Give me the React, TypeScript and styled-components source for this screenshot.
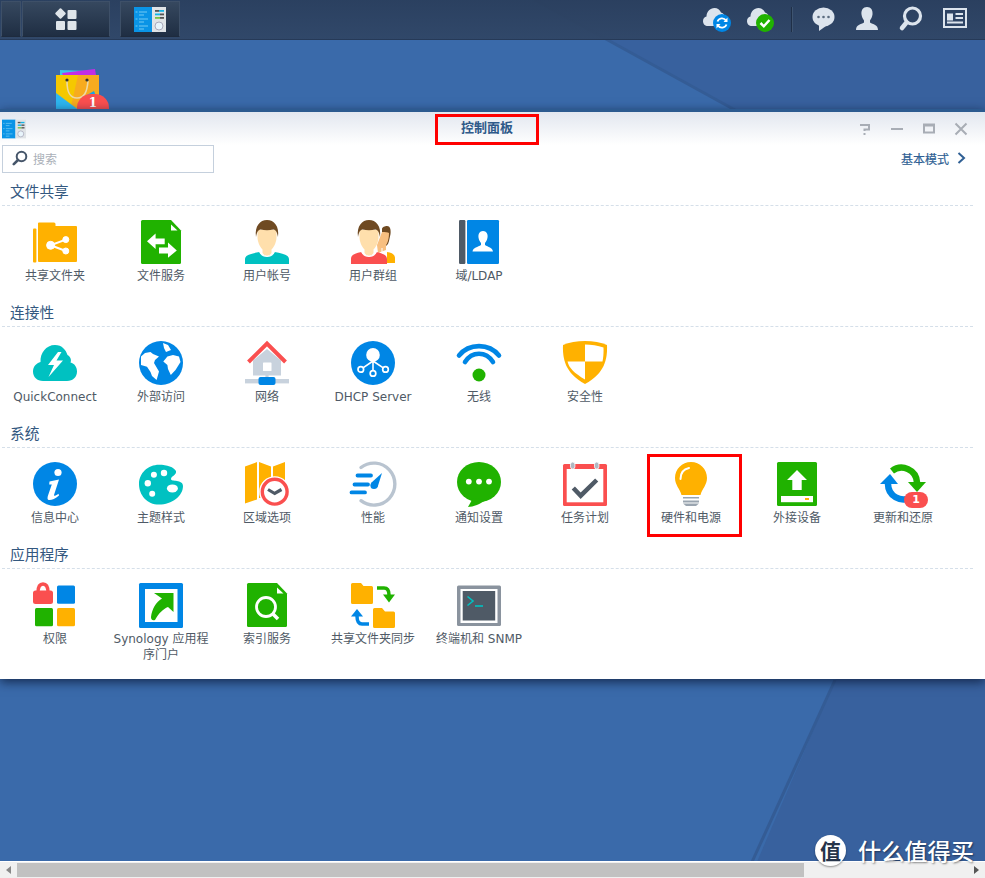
import React from "react";
import styled, { createGlobalStyle } from "styled-components";

const FONT = `"DejaVu Sans", "Noto Sans CJK SC", sans-serif`;
const BLUE = "#0086e5";
const GREEN = "#20b200";
const ORANGE = "#ffb100";
const TEAL = "#00c1c1";
const RED = "#fa4f4f";
const SLATE = "#4f5a66";
const TRAY = "#dce4ed";

const Global = createGlobalStyle`
  html, body { margin: 0; padding: 0; background: #3a66a4; }
  * { box-sizing: border-box; }
`;

const Root = styled.div`
  position: relative;
  width: 985px;
  height: 878px;
  overflow: hidden;
  display: flex;
  flex-direction: column;
  font-family: ${FONT};
`;
const Wallpaper = styled.svg`
  position: absolute;
  inset: 0;
  width: 985px;
  height: 878px;
`;
const TopBar = styled.header`
  position: relative;
  height: 40px;
  flex: none;
  display: flex;
  align-items: stretch;
  padding: 1px 0 2px 1px;
  background: linear-gradient(180deg, rgba(42, 62, 92, 0.95), rgba(48, 70, 102, 0.95));
  border-bottom: 1px solid #263a58;
`;
const Tab = styled.div<{ $w: number; $gap?: number }>`
  width: ${(p) => p.$w}px;
  margin-right: ${(p) => p.$gap ?? 0}px;
  display: flex;
  align-items: center;
  justify-content: center;
  border: 1px solid #3e5068;
  border-bottom-color: #1e2b3e;
  background: linear-gradient(180deg, #36485f, #1f2e43);
`;
const Tray = styled.div`
  margin-left: auto;
  display: flex;
  align-items: center;
  padding-right: 18px;
`;
const TrayIcon = styled.svg<{ $w: number; $gap: number }>`
  width: ${(p) => p.$w}px;
  height: 26px;
  margin-right: ${(p) => p.$gap}px;
  overflow: visible;
`;
const Separator = styled.div`
  width: 1px;
  height: 25px;
  margin-right: 20px;
  background: #1f2f47;
  box-shadow: 1px 0 0 #3e5470;
`;
const Shortcuts = styled.div`
  position: relative;
  height: 69px;
  flex: none;
  overflow: hidden;
  padding: 27px 0 0 56px;
`;
const ShopWrap = styled.div`
  position: relative;
  width: 44px;
  height: 42px;
`;
const ShopBadge = styled.span`
  position: absolute;
  left: 21px;
  top: 27px;
  width: 32px;
  height: 15px;
  padding-top: 3px;
  border-radius: 14px 14px 0 0;
  background: ${RED};
  color: #fff;
  font: bold 12px/12px "DejaVu Serif", serif;
  text-align: center;
`;
const Win = styled.section`
  position: relative;
  flex: none;
  background: #fff;
  border-top: 3px solid #2c5a8f;
  padding-bottom: 13px;
  box-shadow: 0 3px 10px rgba(8, 22, 50, 0.75);
`;
const TitleBar = styled.div`
  height: 33px;
  display: grid;
  grid-template-columns: 435px 104px 1fr;
  align-items: end;
  background: linear-gradient(180deg, #e2e7ef, #fff);
`;
const TitleLeft = styled.div`
  align-self: center;
  padding-left: 2px;
  display: flex;
`;
const Title = styled.h1`
  margin: 0;
  height: 31px;
  border: 3px solid #f00;
  text-align: center;
  font: bold 13px/22px ${FONT};
  color: #2f5a8a;
`;
const Controls = styled.div`
  align-self: center;
  justify-self: end;
  display: flex;
  gap: 16px;
  padding-right: 16px;
`;
const CtrlIcon = styled.svg`
  width: 16px;
  height: 16px;
  display: block;
`;
const Toolbar = styled.div`
  height: 28px;
  display: flex;
  align-items: center;
  justify-content: space-between;
  padding: 0 19px 0 2px;
`;
const Search = styled.div`
  width: 212px;
  height: 28px;
  display: flex;
  align-items: center;
  gap: 5px;
  padding: 0 0 2px 9px;
  border: 1px solid #c5d0dd;
  color: #aab0b8;
  font-size: 12px;
`;
const ModeLink = styled.a`
  display: flex;
  align-items: center;
  gap: 8px;
  padding-bottom: 2px;
  color: #2f5f94;
  font: 12px ${FONT};
  -webkit-text-stroke: 0.2px #2f5f94;
`;
const Sections = styled.div`
  padding-top: 9px;
`;
const Group = styled.div`
  min-height: 121px;
  margin: 0 12px 0 2px;
`;
const GroupTitle = styled.h2`
  margin: 0;
  height: 24px;
  padding-left: 8px;
  border-bottom: 1px dashed #d5dfe9;
  font: normal 14.7px/20px ${FONT};
  color: #33587f;
`;
const Grid = styled.div`
  display: flex;
  padding-top: 14px;
`;
const Item = styled.div<{ $marked?: boolean }>`
  position: relative;
  width: 106px;
  display: flex;
  flex-direction: column;
  align-items: center;
  ${(p) =>
    p.$marked
      ? `&::after { content: ""; position: absolute; left: 9px; right: 2px; top: -8px; bottom: -11px; border: 3px solid #f00; }`
      : ""}
`;
const IconBox = styled.div`
  position: relative;
  width: 44px;
  height: 44px;
`;
const Glyph = styled.svg`
  display: block;
  width: 44px;
  height: 44px;
  overflow: visible;
`;
const CountBadge = styled.span`
  position: absolute;
  left: 23px;
  top: 30px;
  width: 24px;
  height: 16px;
  border-radius: 8px;
  background: ${RED};
  color: #fff;
  font: bold 11px/16px ${FONT};
  text-align: center;
`;
const Label = styled.div`
  width: 102px;
  margin-top: 4px;
  text-align: center;
  font-size: 12px;
  line-height: 16px;
  color: ${SLATE};
`;
const Desktop = styled.div`
  flex: 1;
`;
const ScrollBar = styled.div`
  position: relative;
  height: 17px;
  flex: none;
  display: flex;
  align-items: center;
  border-top: 1px solid #fff;
  background: #f0f0f0;
`;
const Arrow = styled.i<{ $right?: boolean }>`
  display: block;
  flex: none;
  margin: ${(p) => (p.$right ? "0 6px 0 auto" : "0 6px 0 6px")};
  border-style: solid;
  border-width: 4px 0 4px 5px;
  border-color: transparent transparent transparent #555;
  ${(p) => (p.$right ? "" : "border-width: 4px 5px 4px 0; border-color: transparent #888 transparent transparent;")}
`;
const Thumb = styled.div`
  width: 787px;
  height: 14px;
  background: #c1c1c1;
`;
const Watermark = styled.div`
  position: absolute;
  left: 815px;
  top: 835px;
  display: flex;
  align-items: center;
  gap: 12px;
`;
const Seal = styled.span`
  width: 31px;
  height: 31px;
  border-radius: 50%;
  background: #fff;
  color: #26344a;
  font: bold 21px/31px "Noto Sans CJK SC", sans-serif;
  text-align: center;
  box-shadow: 0 1px 2px rgba(0, 0, 0, 0.4);
`;
const Brand = styled.span`
  color: #fff;
  font: 500 23.2px/31px "Noto Sans CJK SC", sans-serif;
  text-shadow: 1px 1px 2px rgba(0, 0, 0, 0.45);
`;

const CpIcon = ({ w, h }: { w: number; h: number }) => (
  <svg width={w} height={h} viewBox="0 0 32 25" style={{ display: "block" }}>
    <rect x="0" y="0" width="18" height="25" fill="#0a94e6" />
    <rect x="18" y="0" width="14" height="25" fill="#dfe3e6" />
    <g stroke="#7fd0f5" strokeWidth="0.9">
      <path d="M5 5h8M5 8h5M5 12h9M5 15h5M5 19h9M5 22h5" />
      <path d="M1.5 5h2M1.5 12h2M1.5 19h2" />
    </g>
    <rect x="21" y="3" width="4" height="1.8" fill="#555" />
    <rect x="25" y="3" width="5" height="1.8" fill="#12b5e8" />
    <rect x="21" y="6.5" width="5" height="1.8" fill="#12b5e8" />
    <rect x="26" y="6.5" width="4" height="1.8" fill="#555" />
    <rect x="21" y="10" width="5" height="1.8" fill="#7ac143" />
    <rect x="26" y="10" width="4" height="1.8" fill="#555" />
    <circle cx="25" cy="19" r="4" fill="#e8f4fb" stroke="#aab" strokeWidth="1" />
  </svg>
);

const ShopIcon = () => (
  <Glyph viewBox="0 0 44 44">
    <path d="M4 3l30 1 1 8H4z" fill="#3cc7ea" />
    <path d="M6 6l33-4 1 6L8 11z" fill="#c22ee6" />
    <path d="M0 8h43v36H0z" fill="#f5c800" />
    <path d="M22 8h21v36H14z" fill="#f7ab1f" />
    <path d="M0 26l24 18H0z" fill="#2eb6f0" />
    <path d="M11 14c0 12 3 17 10 17s10-5 11-17" fill="none" stroke="#ecd9a8" strokeWidth="1.6" />
    <circle cx="11" cy="13" r="1.6" fill="#333" />
    <circle cx="31" cy="13" r="1.6" fill="#333" />
    <path d="M31 28l7-4 3 8-6 4z" fill="#18a3e6" />
  </Glyph>
);

const Head = ({ dx = 0 }: { dx?: number }) => (
  <g transform={`translate(${dx} 0)`}>
    <path d="M12.5 10V18C13 24 16 28 17.5 29.5V33C20 37 24 37 26.5 33V29.5C28 28 31 24 31.5 18V10Z" fill="#ffdfac" />
    <path d="M11 17C9.500 6 15 0 22 0C29 0 34.500 6 33 17C32 12 31 10 28.500 9.500C24 10.500 20 10.500 15.500 9.500C13 10 12 12 11 17Z" fill="#6f4a22" />
  </g>
);

const FILE_SHAPE = "M2 1.5a1.5 1.5 0 0 1 1.5-1.5H32L42 10.5V42.5A1.5 1.5 0 0 1 40.5 44H3.5A1.5 1.5 0 0 1 2 42.5Z";

const icons: Record<string, React.ReactNode> = {
  share: (
    <>
      <rect x="0" y="8.4" width="3.4" height="34" rx="1" fill={ORANGE} />
      <path d="M5 3.4a1 1 0 0 1 1-1H21a1.5 1.5 0 0 1 1.5 1.5V6H43a1 1 0 0 1 1 1V41a1 1 0 0 1-1 1H6a1 1 0 0 1-1-1Z" fill={ORANGE} />
      <g fill="#fff" stroke="#fff">
        <path d="M17.6 25.3L32.8 19.6M17.6 25.3L32.8 31" strokeWidth="2" />
        <circle cx="17.6" cy="25.3" r="4" />
        <circle cx="32.8" cy="19.6" r="3" />
        <circle cx="32.8" cy="31" r="3" />
      </g>
    </>
  ),
  fileSvc: (
    <>
      <path d={FILE_SHAPE} fill={GREEN} />
      <path d="M32 4.5L38.5 10.5H32Z" fill="#fff" />
      <path d="M8 21.3L16.6 13.5V18.5H25.7V24.3H16.6V29Z" fill="#fff" />
      <path d="M37.8 30.4L29 22.6V27.4H20V33.4H29V37.8Z" fill="#fff" />
    </>
  ),
  user: (
    <>
      <path d="M0 44V39C0 35 6 33.5 14.5 32C17 37.5 27 37.5 29.5 32C38 33.5 44 35 44 39V44Z" fill={TEAL} />
      <Head />
      <path d="M14.5 31.5C17 38 27 38 29.5 31.5" fill="none" stroke="#fff" strokeWidth="1.1" />
    </>
  ),
  group: (
    <>
      <path d="M31 16V9C31 7 34 6 36 6C39 6 40 9 39.5 14L38 21L37 24L31 30Z" fill="#6f4a22" />
      <path d="M31 12C34 12 37 12 38 13C38 20 36 24 35 25V30L27 33L26 25Z" fill="#f8bf80" />
      <path d="M36 32C41 32.5 44 35 44 38V43H36Z" fill={ORANGE} />
      <path d="M0 44V39C0 35 3 33.5 10.5 32C13 37.5 23 37.5 25.5 32C32 33.5 36 35 36 39V44Z" fill={RED} />
      <Head dx={-4} />
      <path d="M10.5 31.5C13 38 23 38 25.5 31.5" fill="none" stroke="#fff" strokeWidth="1.1" />
      <path d="M31 28V33L36 33" fill="none" stroke="#fff" strokeWidth="1" />
    </>
  ),
  ldap: (
    <>
      <rect x="2" y="0" width="6.4" height="44" rx="1.2" fill={SLATE} />
      <rect x="10" y="0" width="32" height="44" rx="1.2" fill={BLUE} />
      <path d="M26 11C22.5 11 21 14 21.5 17.5C21.8 20 23 22 24 23V25C21 27 16 27.5 15.5 31.5H36C35.5 27.5 31 27 28 25V23C29 22 30.2 20 30.5 17.5C31 14 29.5 11 26 11Z" fill="#fff" />
    </>
  ),
  quick: (
    <>
      <path d="M10 40C4 40 0 36 0 30.5C0 25.5 3.5 22 7.5 21C7 12 13 4 22 4C29 4 33 9 34.5 14C38 16 38.5 19.5 37.5 21.5C41.5 22.5 44 26 44 30.5C44 36 40 40 34 40Z" fill={TEAL} />
      <path d="M25 11L15 24H21L15.5 36L30 19.5H23.5L28.5 11Z" fill="#fff" />
    </>
  ),
  globe: (
    <>
      <circle cx="22" cy="22" r="22" fill={BLUE} />
      <path d="M2 15.5L6 12L11.5 11L14 13L20 15.5L16 19L15 22L20 30.4L17.6 39L13 35L11.5 31L8 25.7L2 24Z" fill="#fff" />
      <path d="M28.4 15.5L34 14L40 15.5L41.5 21L36.5 29L31.8 34L29 28L28.4 24L24.3 20.6Z" fill="#fff" />
      <path d="M24 2L29 4L32 9L27 11L25 7Z" fill="#fff" />
    </>
  ),
  network: (
    <>
      <path d="M8 19.5L22 8L36 19.5V34.5H8Z" fill="#c8d2dd" />
      <path d="M3.5 21L22 2.5L40.5 21" fill="none" stroke={RED} strokeWidth="4" />
      <rect x="18" y="21.5" width="8.5" height="8.5" rx="0.6" fill="#fff" />
      <rect x="20.4" y="34" width="3.2" height="5" fill="#c8d2dd" />
      <rect x="0" y="38" width="44" height="4.4" fill="#c8d2dd" />
      <rect x="13.5" y="36" width="17" height="8" rx="2" fill={BLUE} />
    </>
  ),
  dhcp: (
    <>
      <circle cx="22" cy="22" r="22" fill={BLUE} />
      <path d="M22 14V32.4M22 20L9.8 28.4M22 20L34.5 28.4" stroke="#fff" strokeWidth="1.6" fill="none" />
      <circle cx="22" cy="13.9" r="6.8" fill="#fff" />
      <g fill={BLUE} stroke="#fff" strokeWidth="1.7">
        <circle cx="9.8" cy="28.4" r="2.8" />
        <circle cx="22" cy="32.4" r="2.8" />
        <circle cx="34.5" cy="28.4" r="2.8" />
      </g>
    </>
  ),
  wifi: (
    <>
      <path d="M2 14.500C12 2 32 2 42 14.500" fill="none" stroke={BLUE} strokeWidth="4.600" strokeLinecap="round" />
      <path d="M8 21C15 10 29 10 36 21" fill="none" stroke={BLUE} strokeWidth="4.600" strokeLinecap="round" />
      <circle cx="22" cy="34" r="6.500" fill={GREEN} />
    </>
  ),
  shield: (
    <>
      <path d="M22 0C30 0 38 1.500 44 4C44.500 18 42 32 22 43C2 32 -0.500 18 0 4C6 1.500 14 0 22 0Z" fill={ORANGE} />
      <path d="M22 3.500C28 3.500 35 4.500 40.500 6.500C40.700 11 40.400 16.500 39.500 20.500H22Z" fill="#fff" />
      <path d="M22 20.500V38.500C11 32 6 27 4.500 20.500Z" fill="#fff" />
    </>
  ),
  info: (
    <>
      <circle cx="22" cy="22" r="22" fill={BLUE} />
      <circle cx="25" cy="10.500" r="3.600" fill="#fff" />
      <path d="M16.500 19.500L26 17.500L21 33C20.800 34.300 22 34.200 25.500 31.800L26 33.500C22 37 18 38.500 15.500 38C14 37.500 14.500 35 15 33.500L18.800 22.500L16.200 22.500Z" fill="#fff" />
    </>
  ),
  palette: (
    <>
      <path d="M20 2.700C28 2.700 35 5 37 9C38 13 32 14 32 17C32 20 44 17 44 24C44 34 33 42.600 20 42.600C8 42.600 0 33 0 22C0 11 9 2.700 20 2.700Z" fill={TEAL} />
      <g fill="#fff">
        <circle cx="14.900" cy="12.800" r="3" />
        <circle cx="25" cy="11" r="3.200" />
        <circle cx="8.800" cy="21.300" r="3.200" />
        <ellipse cx="33.400" cy="26.400" rx="5.500" ry="4" />
        <circle cx="13.200" cy="31.800" r="3" />
      </g>
    </>
  ),
  region: (
    <>
      <path d="M0 4.500L12 0V37.500L0 41.500ZM14 0L26 4.500V36H14ZM28 4.500L40 0V25H28Z" fill={ORANGE} />
      <circle cx="29.700" cy="29.700" r="15.500" fill="#fff" />
      <circle cx="29.700" cy="29.700" r="12.400" fill="#fff" stroke={RED} strokeWidth="3.400" />
      <path d="M23 27.500L29.700 31.500L36.500 27.500" fill="none" stroke={SLATE} strokeWidth="3.200" />
    </>
  ),
  perf: (
    <>
      <path d="M10 5.500A21 21 0 1 1 10 38.700" fill="none" stroke="#b9c4d0" strokeWidth="3.400" strokeLinecap="round" />
      <path d="M6.500 13.500H20M3.500 22.500H17M0.500 30.400H14" stroke={BLUE} strokeWidth="3.800" strokeLinecap="round" />
      <path d="M20 21L31 11L26.500 25.500Z" fill={BLUE} />
      <circle cx="23" cy="23.500" r="3.600" fill={BLUE} />
    </>
  ),
  chat: (
    <>
      <ellipse cx="22" cy="20" rx="22" ry="20" fill={GREEN} />
      <path d="M16 36L11 45C16 45 24 42 28 38Z" fill={GREEN} />
      <g fill="#fff">
        <circle cx="11.800" cy="19.600" r="2.900" />
        <circle cx="22" cy="19.600" r="2.900" />
        <circle cx="32" cy="19.600" r="2.900" />
      </g>
    </>
  ),
  task: (
    <>
      <rect x="0" y="2" width="44" height="42" rx="1.500" fill={RED} />
      <rect x="3.700" y="7" width="36.600" height="33.300" fill="#fff" />
      <rect x="7.500" y="0" width="4.400" height="7" rx="2.200" fill="#aeb8c2" stroke="#fff" strokeWidth="0.800" />
      <rect x="31.500" y="0" width="4.400" height="7" rx="2.200" fill="#aeb8c2" stroke="#fff" strokeWidth="0.800" />
      <path d="M10.300 26L17.700 33.700L33.700 18" fill="none" stroke={SLATE} strokeWidth="4.500" />
    </>
  ),
  bulb: (
    <>
      <path d="M22 0C13 0 6 7 6 16C6 23 11 27 12.500 33H31.500C33 27 38 23 38 16C38 7 31 0 22 0Z" fill={ORANGE} />
      <path d="M11.500 17C11.500 11 15 7 20 6" fill="none" stroke="#fff" strokeWidth="2" strokeLinecap="round" />
      <path d="M14 35H30V36.500H14ZM14 38.500H30V40.500H14Z" fill="#9aa5b0" />
      <path d="M14 41.500H30L27 44H17Z" fill="#9aa5b0" />
    </>
  ),
  ext: (
    <>
      <rect x="2" y="0" width="40" height="44" rx="1.500" fill={GREEN} />
      <path d="M22 8L32 18H26.700V28H17.300V18H12Z" fill="#fff" />
      <rect x="6" y="34" width="32" height="6.200" fill="#fff" />
      <rect x="30" y="36" width="4" height="2" fill={ORANGE} />
    </>
  ),
  update: (
    <>
      <path d="M11 9A15.500 15.500 0 0 1 36 20.500" fill="none" stroke={GREEN} strokeWidth="6.500" />
      <path d="M27 20H45L36 30Z" fill={GREEN} />
      <path d="M30 35.500A15.500 15.500 0 0 1 7 22" fill="none" stroke={BLUE} strokeWidth="6.500" />
      <path d="M-1 22L9 12L17 22Z" fill={BLUE} />
    </>
  ),
  perm: (
    <>
      <path d="M5 9.500C5 3 7.500 1 10 1C12.500 1 15 3 15 9.500" fill="none" stroke={RED} strokeWidth="3.500" />
      <rect x="0" y="7.600" width="20" height="13.500" rx="2.500" fill={RED} />
      <rect x="24" y="2.500" width="18" height="18.300" rx="1.500" fill={BLUE} />
      <rect x="2" y="25" width="18" height="18.300" rx="1.500" fill={GREEN} />
      <rect x="24" y="25" width="18" height="18.300" rx="1.500" fill={ORANGE} />
    </>
  ),
  portal: (
    <>
      <rect x="0" y="0" width="44" height="45" rx="1.500" fill={BLUE} />
      <rect x="6" y="6" width="32.500" height="33" fill="#fff" />
      <path d="M34.500 10V29L29 24C24 26 20 30 16 37C13 38 12 36 12 34C13 26 17 19 23 15.500L15 10Z" fill={GREEN} />
    </>
  ),
  index: (
    <>
      <path d={FILE_SHAPE} fill={GREEN} />
      <path d="M32 4.500L38.500 10.500H32Z" fill="#fff" />
      <circle cx="21" cy="24" r="9.500" fill="none" stroke="#fff" strokeWidth="2.800" />
      <path d="M28 31L33 36" stroke="#fff" strokeWidth="3.500" />
    </>
  ),
  sync: (
    <>
      <path d="M0 1.500A1.500 1.500 0 0 1 1.500 0H10L12.500 3H20.500A1.500 1.500 0 0 1 22 4.500V19.500A1.500 1.500 0 0 1 20.500 21H1.500A1.500 1.500 0 0 1 0 19.500Z" fill={ORANGE} />
      <path d="M22 26.500A1.500 1.500 0 0 1 23.500 25H31L34 28.500H42.500A1.500 1.500 0 0 1 44 30V43.500A1.500 1.500 0 0 1 42.500 45H23.500A1.500 1.500 0 0 1 22 43.500Z" fill={ORANGE} />
      <path d="M26 5H33C37 5 38 8 38 12" fill="none" stroke={GREEN} strokeWidth="3.500" />
      <path d="M32 11.500H44L38 19.500Z" fill={GREEN} />
      <path d="M18 41H11C7.500 41 6 38 6 33" fill="none" stroke={BLUE} strokeWidth="3.500" />
      <path d="M0 33.500L6 26L12 33.500Z" fill={BLUE} />
    </>
  ),
  term: (
    <>
      <rect x="0" y="2.500" width="44" height="40.500" rx="1.500" fill="#8a939e" />
      <rect x="3.500" y="6" width="37" height="34" fill="#fff" />
      <rect x="5.700" y="8" width="32.500" height="29.500" fill={SLATE} />
      <path d="M10.500 13.500L16 18L10.500 22.500" fill="none" stroke={TEAL} strokeWidth="1.600" />
      <path d="M18 23H26" stroke={TEAL} strokeWidth="1.600" />
    </>
  ),
};

type Entry = { label: string; icon: string; badge?: string; marked?: boolean };
const groups: { title: string; items: Entry[] }[] = [
  {
    title: "文件共享",
    items: [
      { label: "共享文件夹", icon: "share" },
      { label: "文件服务", icon: "fileSvc" },
      { label: "用户帐号", icon: "user" },
      { label: "用户群组", icon: "group" },
      { label: "域/LDAP", icon: "ldap" },
    ],
  },
  {
    title: "连接性",
    items: [
      { label: "QuickConnect", icon: "quick" },
      { label: "外部访问", icon: "globe" },
      { label: "网络", icon: "network" },
      { label: "DHCP Server", icon: "dhcp" },
      { label: "无线", icon: "wifi" },
      { label: "安全性", icon: "shield" },
    ],
  },
  {
    title: "系统",
    items: [
      { label: "信息中心", icon: "info" },
      { label: "主题样式", icon: "palette" },
      { label: "区域选项", icon: "region" },
      { label: "性能", icon: "perf" },
      { label: "通知设置", icon: "chat" },
      { label: "任务计划", icon: "task" },
      { label: "硬件和电源", icon: "bulb", marked: true },
      { label: "外接设备", icon: "ext" },
      { label: "更新和还原", icon: "update", badge: "1" },
    ],
  },
  {
    title: "应用程序",
    items: [
      { label: "权限", icon: "perm" },
      { label: "Synology 应用程序门户", icon: "portal" },
      { label: "索引服务", icon: "index" },
      { label: "共享文件夹同步", icon: "sync" },
      { label: "终端机和 SNMP", icon: "term" },
    ],
  },
];

const CLOUD = "M5 20C2 20 0 18 0 15C0 12.500 1.500 11 3.500 10.500C3.500 6 7 2 11.500 2C14.500 2 17 4 18 6.500C20.500 7 22 9.500 22 12V20Z";

export default function App() {
  return (
    <Root>
      <Global />
      <Wallpaper viewBox="0 0 985 878" aria-hidden="true">
        <rect width="985" height="878" fill="#3a6aaa" />
        <path d="M535 0H985V878H750L835 680L985 500V205L735 110Z" fill="#38619e" />
        <path d="M535 0L735 110" stroke="#345c95" strokeWidth="3" />
        <path d="M835 680L752 862" stroke="#345c95" strokeWidth="3" />
      </Wallpaper>

      <TopBar>
        <Tab $w={20} $gap={1} />
        <Tab $w={88} $gap={10}>
          <svg width="24" height="24" viewBox="0 0 24 24">
            <g fill="#dfe5ea">
              <rect x="2.500" y="2.500" width="8" height="8" rx="1" transform="rotate(45 6.500 6.500)" />
              <rect x="13.500" y="3" width="9" height="9" rx="1" />
              <rect x="2" y="14" width="9" height="9" rx="1" />
              <rect x="13.500" y="14" width="9" height="9" rx="1" />
            </g>
          </svg>
        </Tab>
        <Tab $w={60}>
          <CpIcon w={32} h={25} />
        </Tab>
        <Tray>
          <TrayIcon $w={30} $gap={14} viewBox="0 0 30 26">
            <path d={CLOUD} fill={TRAY} />
            <circle cx="19" cy="17" r="9" fill={BLUE} />
            <path d="M14.500 15.500A4.800 4.800 0 0 1 23 14.500M23.500 18.500A4.800 4.800 0 0 1 15 19.500" fill="none" stroke="#fff" strokeWidth="1.800" />
            <path d="M24.500 11.500V16H20.500ZM13.500 22.500V18H17.500Z" fill="#fff" />
          </TrayIcon>
          <TrayIcon $w={27} $gap={17} viewBox="0 0 27 26">
            <path d={CLOUD} fill={TRAY} />
            <circle cx="18" cy="17" r="9" fill={GREEN} />
            <path d="M13.500 17L16.800 20.300L22.500 14" fill="none" stroke="#fff" strokeWidth="2.500" />
          </TrayIcon>
          <Separator />
          <TrayIcon $w={23} $gap={21} viewBox="0 0 23 26">
            <ellipse cx="11.500" cy="11" rx="11" ry="9.500" fill={TRAY} />
            <path d="M7 18L7 25L14 20Z" fill={TRAY} />
            <g fill="#5b6c80">
              <circle cx="6.500" cy="11" r="1.300" />
              <circle cx="11.500" cy="11" r="1.300" />
              <circle cx="16.500" cy="11" r="1.300" />
            </g>
          </TrayIcon>
          <TrayIcon $w={22} $gap={22} viewBox="0 0 22 26">
            <path d="M11 1C7 1 5 4 5.500 8.500C5.800 11 7 13 8 14.500V16.500C5 18.500 0 18.500 0 24H22C22 18.500 17 18.500 14 16.500V14.500C15 13 16.200 11 16.500 8.500C17 4 15 1 11 1Z" fill={TRAY} />
          </TrayIcon>
          <TrayIcon $w={22} $gap={21} viewBox="0 0 22 26">
            <circle cx="12.500" cy="10" r="8" fill="none" stroke={TRAY} strokeWidth="3.200" />
            <path d="M6.500 16.500L2 22" stroke={TRAY} strokeWidth="4.500" strokeLinecap="round" />
          </TrayIcon>
          <TrayIcon $w={24} $gap={0} viewBox="0 0 24 26">
            <rect x="1" y="3" width="22" height="18" fill="none" stroke={TRAY} strokeWidth="2" />
            <rect x="4" y="7.500" width="6" height="7" fill={TRAY} />
            <path d="M4 16.500H20M12.500 8H20M12.500 12H20" stroke={TRAY} strokeWidth="1.800" />
          </TrayIcon>
        </Tray>
      </TopBar>

      <Shortcuts>
        <ShopWrap>
          <ShopIcon />
          <ShopBadge>1</ShopBadge>
        </ShopWrap>
      </Shortcuts>

      <Win>
        <TitleBar>
          <TitleLeft>
            <CpIcon w={24} h={20} />
          </TitleLeft>
          <Title>控制面板</Title>
          <Controls>
            <CtrlIcon viewBox="0 0 16 16">
              <path d="M3 4H12V8.500H7.500V10M7.500 12V14" fill="none" stroke="#a8adb5" strokeWidth="2" />
            </CtrlIcon>
            <CtrlIcon viewBox="0 0 16 16">
              <path d="M2 8H14" stroke="#a8adb5" strokeWidth="2" />
            </CtrlIcon>
            <CtrlIcon viewBox="0 0 16 16">
              <rect x="3" y="3.500" width="10" height="8" fill="none" stroke="#a8adb5" strokeWidth="2" />
              <path d="M3 4.500H13" stroke="#a8adb5" strokeWidth="2" />
            </CtrlIcon>
            <CtrlIcon viewBox="0 0 16 16">
              <path d="M2.500 2.500L13.500 13.500M13.500 2.500L2.500 13.500" stroke="#a8adb5" strokeWidth="2" />
            </CtrlIcon>
          </Controls>
        </TitleBar>
        <Toolbar>
          <Search>
            <svg width="16" height="16" viewBox="0 0 16 16">
              <circle cx="9.500" cy="6.500" r="4.800" fill="none" stroke="#46566a" strokeWidth="2" />
              <path d="M6 10L1.800 14.200" stroke="#46566a" strokeWidth="2.600" strokeLinecap="round" />
            </svg>
            搜索
          </Search>
          <ModeLink>
            基本模式
            <svg width="9" height="12" viewBox="0 0 9 12">
              <path d="M1.500 1L7 6L1.500 11" fill="none" stroke="#2f5f94" strokeWidth="2" />
            </svg>
          </ModeLink>
        </Toolbar>
        <Sections>
          {groups.map((g) => (
            <Group key={g.title}>
              <GroupTitle>{g.title}</GroupTitle>
              <Grid>
                {g.items.map((it) => (
                  <Item key={it.label} $marked={it.marked}>
                    <IconBox>
                      <Glyph viewBox="0 0 44 44">{icons[it.icon]}</Glyph>
                      {it.badge && <CountBadge>{it.badge}</CountBadge>}
                    </IconBox>
                    <Label>{it.label}</Label>
                  </Item>
                ))}
              </Grid>
            </Group>
          ))}
        </Sections>
      </Win>

      <Desktop />

      <ScrollBar>
        <Arrow />
        <Thumb />
        <Arrow $right />
      </ScrollBar>

      <Watermark>
        <Seal>值</Seal>
        <Brand>什么值得买</Brand>
      </Watermark>
    </Root>
  );
}
